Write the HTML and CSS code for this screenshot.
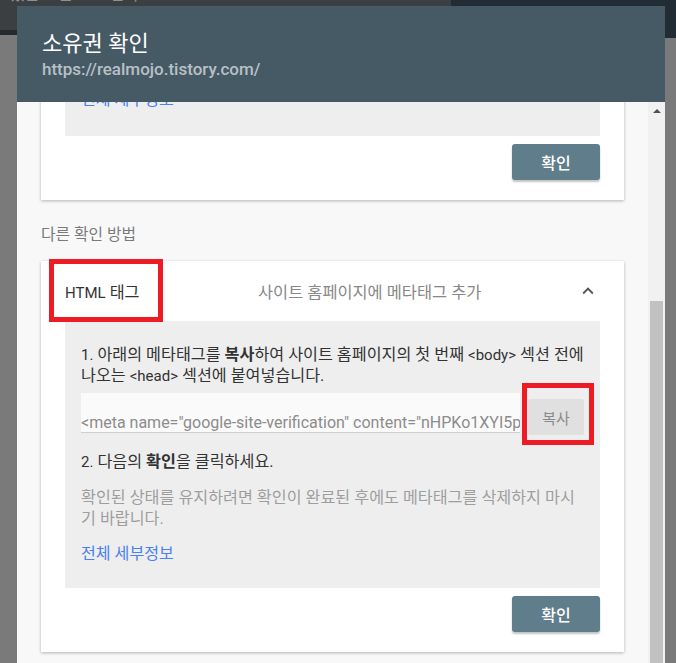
FILE: index.html
```html
<!DOCTYPE HTML>
<html lang="ko">
<head>
    <meta name="viewport" content="width=device-width, initial-scale=1">
    <title>소유권 확인</title>
    <link rel="stylesheet" href="styles.css">
</head>
<body>
    <div class="page">
        <div class="page-head">
            <div class="page-head-left"><span class="page-title">있는 모든 URL 검사</span></div>
            <div class="page-head-right"></div>
        </div>
    </div>

    <div class="dialog">
        <header class="dialog-head">
            <h1 class="dialog-title">소유권 확인</h1>
            <div class="dialog-url">https://realmojo.tistory.com/</div>
        </header>
        <div class="dialog-body">
            <div class="scroll-area">
                <div class="scroll-inner">
                    <section class="card">
                        <div class="card-box card-box-first">
                            <a class="more-link" href="#">전체 세부정보</a>
                        </div>
                        <div class="card-actions">
                            <button class="btn-confirm">확인</button>
                        </div>
                    </section>

                    <div class="section-label">다른 확인 방법</div>

                    <section class="card">
                        <div class="card-head">
                            <span class="method-name"><span class="lat">HTML</span> 태그</span>
                            <span class="method-desc">사이트 홈페이지에 메타태그 추가</span>
                            <svg class="chevron" viewBox="0 0 24 24" width="22" height="22">
                                <path d="M12 8l-6 6 1.41 1.41L12 10.83l4.59 4.58L18 14z" fill="#555"/>
                            </svg>
                            <span class="mark mark-title"></span>
                        </div>
                        <div class="card-box">
                            <p class="step"><span class="lat">1.</span> 아래의 메타태그를 <b>복사</b>하여 사이트 홈페이지의 첫 번째 <span class="lat">&lt;body&gt;</span> 섹션 전에 나오는 <span class="lat">&lt;head&gt;</span> 섹션에 붙여넣습니다.</p>
                            <div class="copy-row">
                                <input class="meta-input" type="text" readonly value="&lt;meta name=&quot;google-site-verification&quot; content=&quot;nHPKo1XYI5pQx3Wv8rTbKzL2mN0aE7sG4hJdF6uYcVo&quot; /&gt;">
                                <button class="btn-copy">복사</button>
                                <span class="mark mark-copy"></span>
                            </div>
                            <p class="step step-two"><span class="lat">2.</span> 다음의 <b>확인</b>을 클릭하세요.</p>
                            <p class="note">확인된 상태를 유지하려면 확인이 완료된 후에도 메타태그를 삭제하지 마시기 바랍니다.</p>
                            <a class="more-link more-link-bottom" href="#">전체 세부정보</a>
                        </div>
                        <div class="card-actions">
                            <button class="btn-confirm">확인</button>
                        </div>
                    </section>
                </div>
            </div>
            <div class="scrollbar">
                <span class="scroll-up"></span>
                <span class="scroll-thumb"></span>
            </div>
        </div>
    </div>
</body>
</html>
```

FILE: styles.css
```css
* {
    box-sizing: border-box;
}
html, body {
    margin: 0;
    height: 100%;
}
body {
    background: #7a7a7a;
    overflow: hidden;
    position: relative;
    font-family: Roboto, "Noto Sans CJK KR", sans-serif;
}
.lat {
    font-size: 15px;
    line-height: 1;
}
.page-head {
    display: flex;
    align-items: flex-start;
}
.page-head-left {
    width: 451px;
    height: 35px;
    background: #3c3f41;
    border-bottom: 5px solid #232b30;
    overflow: hidden;
}
.page-title {
    display: block;
    margin: -15px 0 0 10px;
    font-size: 16px;
    line-height: 20px;
    color: #8d8f91;
}
.page-head-right {
    flex: 1;
    height: 38px;
    background: #222c34;
}
.dialog {
    position: absolute;
    left: 17px;
    top: 6px;
    width: 648px;
    bottom: 0;
    display: flex;
    flex-direction: column;
    overflow: hidden;
}
.dialog-head {
    height: 96px;
    background: #465a65;
    padding: 23px 25px 0;
}
.dialog-title {
    margin: 0;
    font-size: 22px;
    line-height: 29px;
    font-weight: 400;
    color: #fff;
}
.dialog-url {
    font-size: 17px;
    line-height: 22px;
    font-weight: 500;
    color: #b7c0c5;
}
.dialog-body {
    flex: 1;
    display: flex;
    background: #f8f8f8;
    min-height: 0;
}
.scroll-area {
    flex: 1;
    overflow: hidden;
}
.scroll-inner {
    margin-top: -12px;
    padding: 0 24px;
}
.card {
    background: #fff;
    box-shadow: 0 1px 3px rgba(0, 0, 0, 0.28);
}
.card-box {
    margin: 0 24px;
    background: #eeeeee;
    padding: 23px 16px 24px;
    font-size: 16.2px;
    line-height: 21px;
}
.card-box-first {
    padding: 0 16px 26px;
    line-height: 20px;
}
.more-link {
    display: block;
    color: #4a80f0;
    text-decoration: none;
    font-size: 16.1px;
}
.card-actions {
    display: flex;
    justify-content: flex-end;
    padding: 8px 24px 20px;
}
.btn-confirm {
    width: 88px;
    height: 36px;
    border: none;
    border-radius: 3px;
    background: #607d8b;
    color: #fff;
    font-family: Roboto, "Noto Sans CJK KR", sans-serif;
    font-size: 16px;
    font-weight: 500;
    box-shadow: 0 2px 2px rgba(0, 0, 0, 0.24);
    cursor: pointer;
}
.section-label {
    margin: 25px 0 16px;
    font-size: 15.8px;
    line-height: 20px;
    color: #7a7a7a;
}
.card-head {
    position: relative;
    display: flex;
    align-items: center;
    height: 60px;
    padding: 0 25px 0 24px;
    font-size: 16.2px;
}
.method-name {
    width: 193px;
    color: #333;
}
.method-desc {
    flex: 1;
    color: #888;
    font-size: 16.4px;
}
.chevron {
    display: block;
}
.mark {
    position: absolute;
    border: 5px solid #ed1c24;
}
.mark-title {
    left: 8px;
    top: -2px;
    width: 114px;
    height: 63px;
}
.step {
    margin: 0;
    color: #333;
}
.step b {
    font-weight: 700;
}
.copy-row {
    position: relative;
    display: flex;
    align-items: flex-start;
    gap: 8px;
    margin-top: 7px;
    height: 42px;
}
.meta-input {
    flex: 1;
    min-width: 0;
    height: 40px;
    padding: 20px 0 0;
    border: none;
    border-bottom: 1px solid #cfcfcf;
    background: #fafafa;
    color: #8c8c8c;
    font-family: Roboto, sans-serif;
    font-size: 16px;
    outline: none;
}
.btn-copy {
    width: 56px;
    height: 36px;
    margin-top: 6px;
    border: none;
    border-radius: 2px;
    background: #e0e0e0;
    color: #8a8a8a;
    font-family: Roboto, "Noto Sans CJK KR", sans-serif;
    font-size: 15px;
}
.mark-copy {
    left: 441px;
    top: -10px;
    width: 72px;
    height: 62px;
}
.step-two {
    margin-top: 16px;
}
.note {
    margin: 15px 0 0;
    color: #9e9e9e;
}
.more-link-bottom {
    margin-top: 14px;
    line-height: 21px;
}
.scrollbar {
    width: 17px;
    background: #f1f1f1;
    display: flex;
    flex-direction: column;
    padding-top: 7px;
}
.scroll-up {
    align-self: center;
    width: 0;
    height: 0;
    border-left: 4px solid transparent;
    border-right: 4px solid transparent;
    border-bottom: 4px solid #505050;
}
.scroll-thumb {
    margin: 188px 0 0 2px;
    width: 13px;
    flex: 1;
    background: #c1c1c1;
}
```
